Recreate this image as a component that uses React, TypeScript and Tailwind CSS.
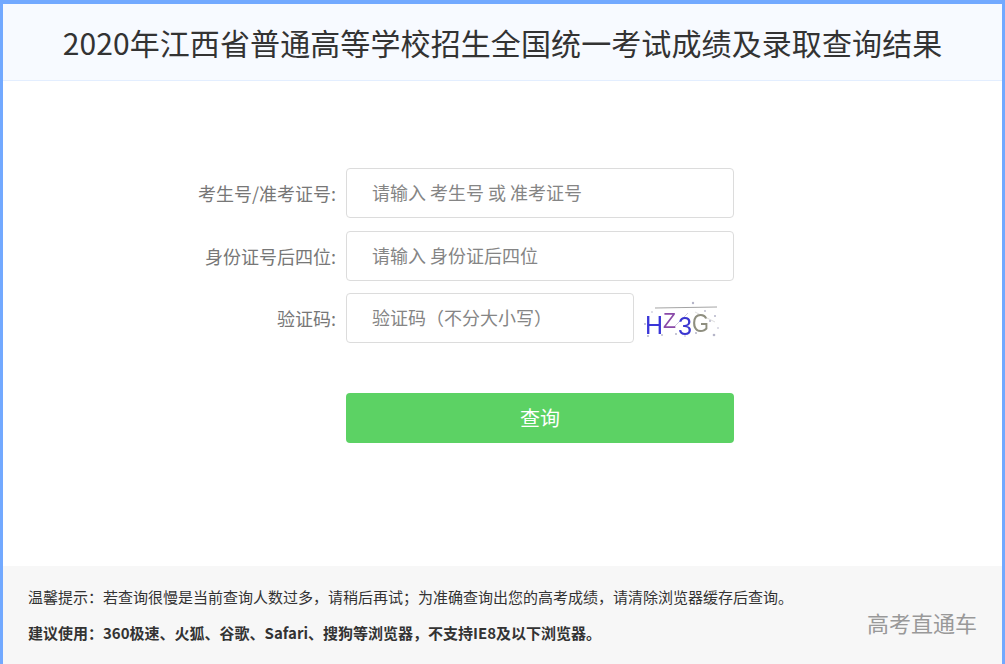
const cjk = "font-['Microsoft_YaHei','Noto_Sans_CJK_SC',sans-serif]";

function Captcha() {
  return (
    <svg width="78" height="46" viewBox="0 -3 78 46" className="ml-[9px] shrink-0 blur-[0.5px]">
      <line x1="12" y1="10" x2="74" y2="9" stroke="#9a9a9a" strokeWidth="0.9" />
      <line x1="30" y1="30" x2="45" y2="15" stroke="#c9c5d8" strokeWidth="0.9" />
      <line x1="52" y1="14" x2="72" y2="24" stroke="#d5d5d5" strokeWidth="0.8" />
      <g fill="#b5b5c8">
        <circle cx="2" cy="26" r="1" />
        <circle cx="5" cy="38" r="1" />
        <circle cx="19" cy="37" r="0.9" />
        <circle cx="33" cy="36" r="1" />
        <circle cx="50" cy="5" r="1.2" />
        <circle cx="53" cy="35" r="1" />
        <circle cx="67" cy="23" r="1" />
        <circle cx="72" cy="18" r="1" />
        <circle cx="71" cy="37" r="1.3" />
        <circle cx="9" cy="14" r="0.8" />
        <circle cx="62" cy="13" r="0.9" />
        <circle cx="42" cy="38" r="0.8" />
        <circle cx="75" cy="30" r="0.8" />
      </g>
      <g fontFamily="'Liberation Sans',sans-serif">
        <text x="2" y="36" fontSize="26" fill="#3a36d8" textLength="18" lengthAdjust="spacingAndGlyphs">H</text>
        <text x="20" y="30" fontSize="22" fill="#8a4aa8" textLength="13" lengthAdjust="spacingAndGlyphs">Z</text>
        <text x="35" y="37" fontSize="25" fill="#3a36d0" textLength="14" lengthAdjust="spacingAndGlyphs">3</text>
        <text x="49" y="34" fontSize="25" fill="#8f8f80" textLength="17" lengthAdjust="spacingAndGlyphs">G</text>
      </g>
    </svg>
  );
}

function Row({ label, placeholder, children, inputWidth = "w-[388px]" }: { label: string; placeholder: string; children?: React.ReactNode; inputWidth?: string }) {
  return (
    <div className="flex items-center">
      <label className="w-[336px] shrink-0 text-right text-[18px] text-[#777]">{label}</label>
      <input
        readOnly
        placeholder={placeholder}
        className={`ml-[10px] h-[50px] ${inputWidth} rounded border border-[#dcdcdc] bg-white pb-[2px] pl-[25px] text-[18px] outline-none placeholder:text-[#858585]`}
      />
      {children}
    </div>
  );
}

export default function App() {
  return (
    <div className={`relative flex h-[664px] w-[1005px] flex-col overflow-hidden border-x-[3px] border-t-[4px] border-[#72a9ff] bg-white ${cjk}`}>
      <header className="flex h-[77px] shrink-0 items-center justify-center border-b border-[#e3eeff] bg-[#f7faff]">
        <h1 className="text-[30px] font-normal tracking-[0.1px] text-[#333]">2020年江西省普通高等学校招生全国统一考试成绩及录取查询结果</h1>
      </header>

      <main className="flex-1 pt-[87px]">
        <div className="-ml-[3px] flex flex-col">
          <Row label="考生号/准考证号:" placeholder="请输入 考生号 或 准考证号" />
          <div className="mt-[13px]">
            <Row label="身份证号后四位:" placeholder="请输入 身份证后四位" />
          </div>
          <div className="mt-[12px]">
            <Row label="验证码:" placeholder="验证码（不分大小写）" inputWidth="w-[288px]">
              <Captcha />
            </Row>
          </div>
        </div>
        <div className="mt-[50px] pl-[343px]">
          <button className="h-[50px] w-[388px] rounded bg-[#5cd264] text-[20px] text-white">查询</button>
        </div>
      </main>

      <footer className="flex h-[98px] shrink-0 items-start justify-between bg-[#f7f7f7] pl-[25px] pr-[25px]">
        <div className="pt-[20px] text-[15px] leading-[21px] text-[#333]">
          <p>温馨提示：若查询很慢是当前查询人数过多，请稍后再试；为准确查询出您的高考成绩，请清除浏览器缓存后查询。</p>
          <p className="mt-[15px] font-bold">建议使用：360极速、火狐、谷歌、Safari、搜狗等浏览器，不支持IE8及以下浏览器。</p>
        </div>
        <span className="pt-[41px] text-[22px] leading-[30px] text-[#999]">高考直通车</span>
      </footer>

      <span className="absolute -left-[3px] bottom-0 h-[28px] w-[3px] bg-[#a3c6ff]" />
    </div>
  );
}
